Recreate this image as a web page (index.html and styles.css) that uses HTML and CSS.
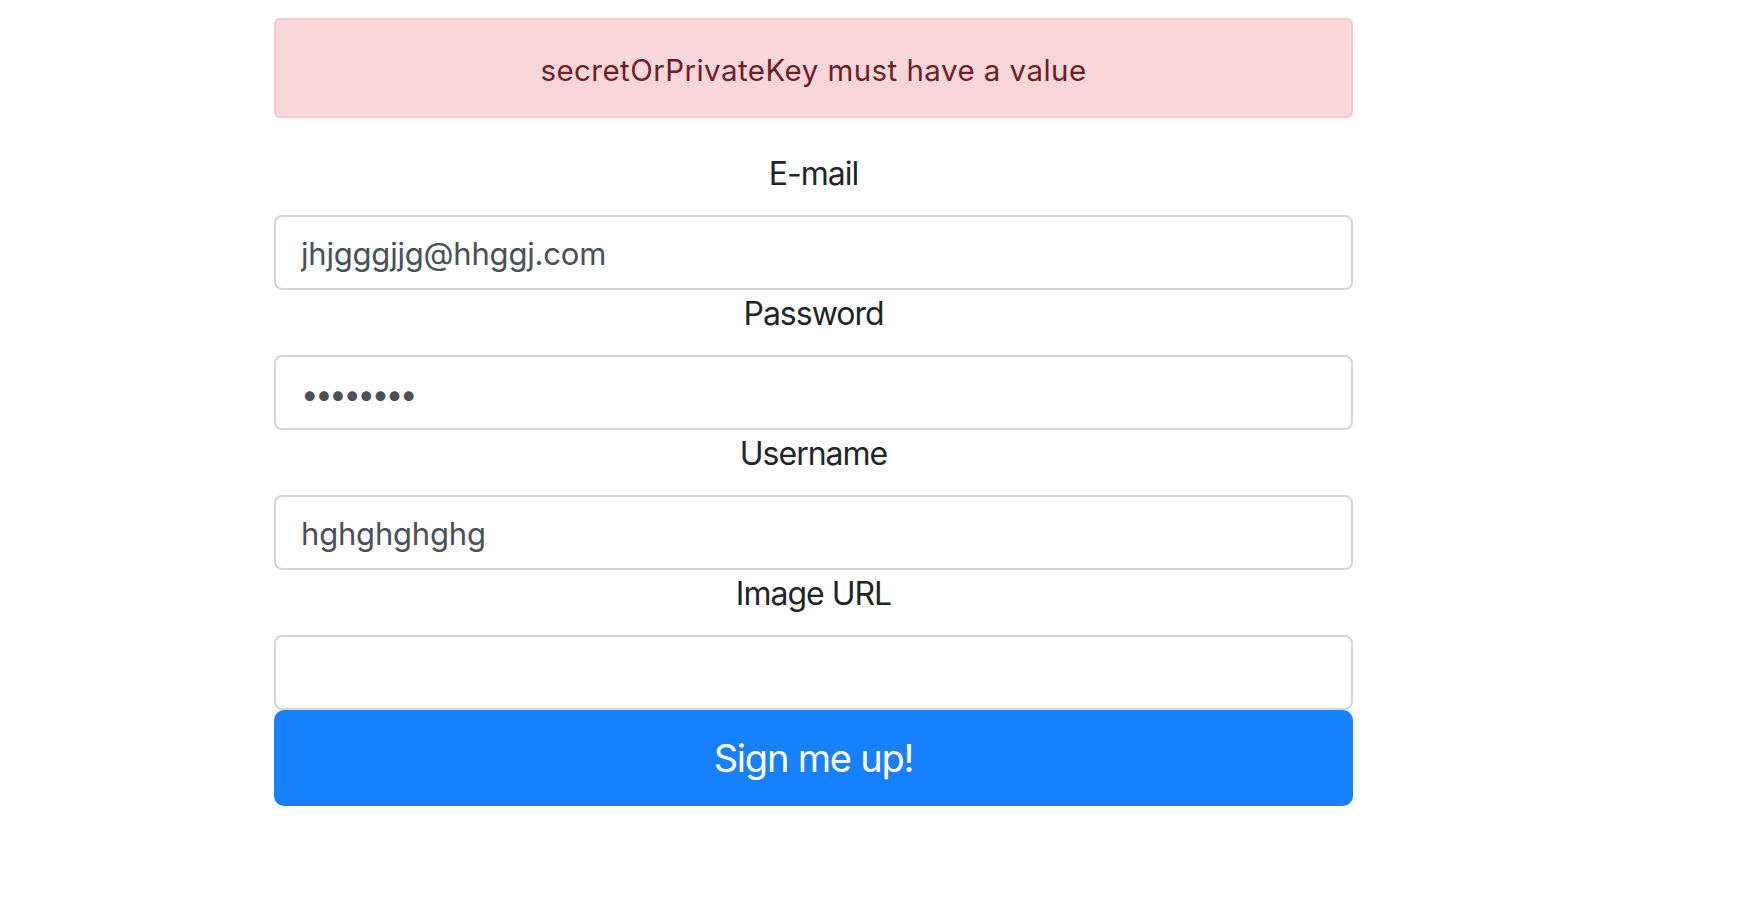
FILE: index.html
```html
<!DOCTYPE html>
<html>
<head>
<meta charset="utf-8">
<link rel="stylesheet" href="styles.css">
</head>
<body>
<div class="page">
  <form class="signup">
    <div class="alert">secretOrPrivateKey must have a value</div>
    <label class="label">E-mail</label>
    <input class="field" type="email" value="jhjgggjjg@hhggj.com">
    <label class="label">Password</label>
    <input class="field field-pass" type="password" value="12345678">
    <label class="label">Username</label>
    <input class="field" type="text" value="hghghghghg">
    <label class="label">Image URL</label>
    <input class="field" type="text" value="">
    <button class="submit" type="button">Sign me up!</button>
  </form>
</div>
</body>
</html>
```
FILE: styles.css
```css
html, body {
  margin: 0;
  background: #fff;
}
body {
  font-family: Inter, "Noto Sans", sans-serif;
  color: #212529;
}
.page {
  padding: 18px 0 0 274px;
}
.signup {
  width: 1079px;
  display: flex;
  flex-direction: column;
}
.alert {
  box-sizing: border-box;
  height: 100px;
  padding-top: 3px;
  display: flex;
  align-items: center;
  justify-content: center;
  background: #f8d7da;
  border: 2px solid #f5c6cb;
  border-radius: 6px;
  color: #721c24;
  font-size: 29.5px;
  letter-spacing: 0.45px;
  margin-bottom: 32px;
}
.label {
  display: block;
  text-align: center;
  font-size: 32px;
  line-height: 48px;
  letter-spacing: -1px;
  margin-bottom: 17px;
}
.field {
  box-sizing: border-box;
  height: 75px;
  width: 100%;
  margin: 0;
  padding: 2px 25px 0;
  border: 2px solid #d3d5d8;
  border-radius: 8px;
  font-family: Inter, "Noto Sans", sans-serif;
  font-size: 31px;
  letter-spacing: -0.2px;
  color: #495057;
  background: #fff;
  outline: none;
}
.field-pass {
  letter-spacing: -3.3px;
}
.submit {
  height: 96px;
  border: none;
  border-radius: 10px;
  background: #1780fc;
  color: #fff;
  font-family: Inter, "Noto Sans", sans-serif;
  font-size: 38px;
  letter-spacing: -1.2px;
  margin: 0;
}
```
